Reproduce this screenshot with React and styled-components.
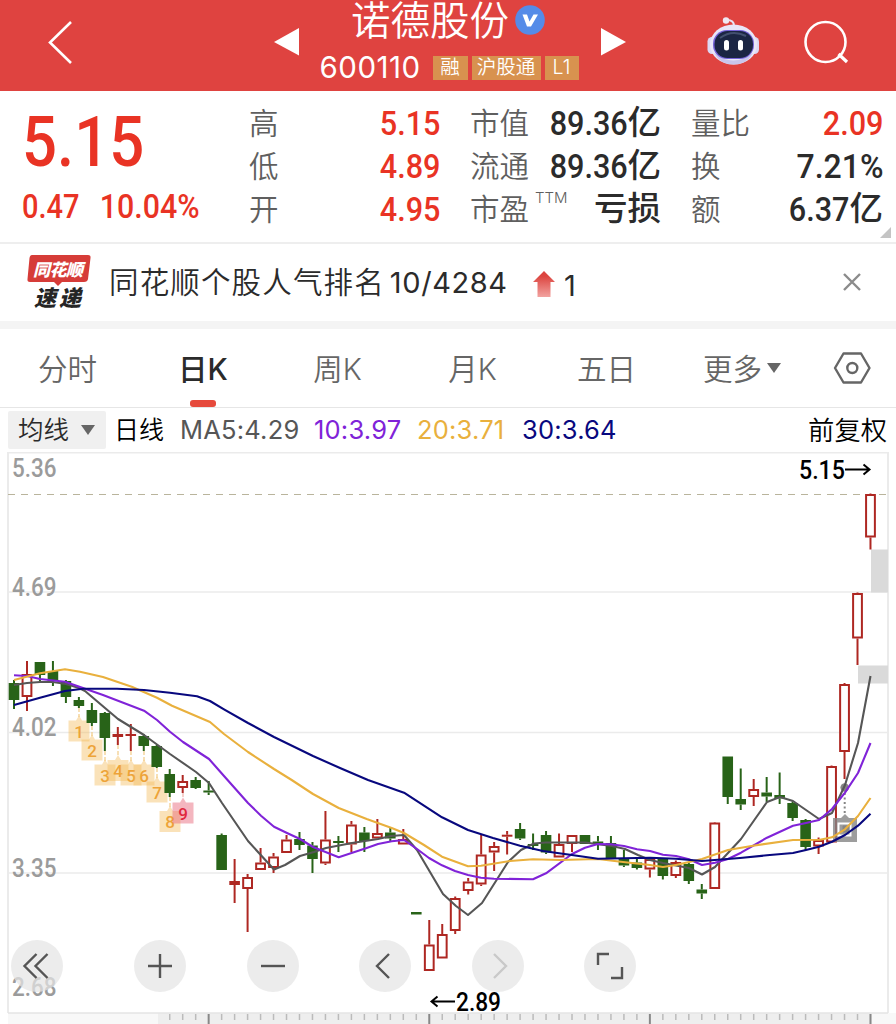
import React from 'react'
import styled, { createGlobalStyle } from 'styled-components'

const GlobalStyle = createGlobalStyle`
  * { box-sizing: border-box; }
  body {
    margin: 0;
    background: #fff;
    color: #2b2b2b;
    font-family: Inter, 'Noto Sans CJK SC', sans-serif;
    overflow: hidden;
  }
`

const Page = styled.div`
  width: 896px;
  height: 1024px;
  overflow: hidden;
  display: flex;
  flex-direction: column;
`

/* header */

const TopBar = styled.header`
  display: flex;
  height: 91px;
  flex: none;
  background: #df4340;
  color: #fff;
`

const BarIcon = styled.svg`
  flex: none;
  display: block;
  width: ${p => p.$w}px;
  height: 91px;
  overflow: visible;
`

const Heading = styled.div`
  width: 262px;
  flex: none;
  display: flex;
  flex-direction: column;
  align-items: center;
`

const StockName = styled.div`
  display: flex;
  align-items: flex-start;
  height: 46px;
  margin-left: -4px;
  gap: 6px;
  font-size: 39.5px;
  line-height: 42px;
  font-weight: 350;
  white-space: nowrap;
  svg { margin-top: 5px; }
`

const CodeRow = styled.div`
  display: flex;
  align-items: center;
  gap: 4px;
  height: 28px;
  margin-top: 8px;
  margin-left: -2px;
`

const Code = styled.span`
  width: 109px;
  margin-top: -2px;
  font-size: 29.5px;
  font-weight: 400;
  letter-spacing: 0.5px;
  white-space: nowrap;
`

const Badge = styled.span`
  width: ${p => p.$w}px;
  height: 24px;
  flex: none;
  background: #d8924f;
  font-size: 19.5px;
  font-weight: 350;
  line-height: 23px;
  text-align: center;
  white-space: nowrap;
`

/* quote */

const Quote = styled.section`
  position: relative;
  display: flex;
  height: 153px;
  flex: none;
  padding: 10px 13px 0 0;
  border-bottom: 2px solid #eee;
`

const Num = styled.span`
  display: inline-block;
  font-family: Roboto, 'Noto Sans CJK SC', sans-serif;
  font-weight: 500;
  font-size: ${p => p.$size || 34}px;
  line-height: 1;
  color: ${p => (p.$up ? '#e93324' : '#2b2b2b')};
  transform: scaleX(${p => p.$x || 0.9});
  transform-origin: ${p => p.$origin || 'right'} center;
  white-space: nowrap;
`

const PriceBlock = styled.div`
  width: 249px;
  flex: none;
  padding: 6px 0 0 22px;
`

const Price = styled.div`
  height: 83px;
  line-height: 70px;
`

const Change = styled.div`
  display: flex;
  width: 177px;
  justify-content: space-between;
`

const Stats = styled.div`
  display: grid;
  grid-template-columns: 191px 191px 192px;
  grid-auto-rows: 43px;
  column-gap: 30px;
`

const Stat = styled.div`
  display: flex;
  justify-content: space-between;
  align-items: center;
`

const Label = styled.span`
  font-size: 29.5px;
  font-weight: 350;
  line-height: 43px;
  margin-top: 2px;
  color: #5f5f5f;
  white-space: nowrap;
  sup {
    display: inline-block;
    font-size: 15px;
    line-height: 1;
    vertical-align: 17px;
    margin-left: 6px;
    letter-spacing: 0;
  }
`

const Value = styled.span`
  display: flex;
  align-items: center;
  justify-content: flex-end;
  width: 0;
  em {
    font-style: normal;
    font-size: 33.5px;
    line-height: 43px;
    font-weight: 500;
    white-space: nowrap;
  }
`

const Corner = styled.i`
  position: absolute;
  right: 5px;
  bottom: 4px;
  border-left: 11px solid transparent;
  border-bottom: 11px solid #c4c4c4;
`

/* news strip */

const News = styled.section`
  display: flex;
  align-items: center;
  height: 85px;
  flex: none;
  border-bottom: 8px solid #f4f4f4;
  padding-left: 26px;
`

const NewsLogo = styled.svg`
  overflow: visible;
  flex: none;
  margin-top: -3px;
`

const NewsText = styled.span`
  margin-left: 18px;
  margin-top: -6px;
  width: 423px;
  font-size: 29.5px;
  font-weight: 350;
  letter-spacing: 1.15px;
  white-space: nowrap;
  b { font-weight: 400; font-size: 29px; letter-spacing: 0.6px; margin-left: 5px; }
`

const Rank = styled.span`
  width: 278px;
  margin-left: 8px;
  margin-top: 6px;
  font-size: 29px;
`

const Close = styled.svg`
  margin-top: -2px;
`

/* tabs */

const Tabs = styled.nav`
  display: flex;
  height: 79px;
  flex: none;
  border-bottom: 1px solid #e6e6e6;
`

const Tab = styled.div`
  display: flex;
  flex-direction: column;
  align-items: center;
  justify-content: space-between;
  width: ${p => p.$w}px;
  padding-top: 18px;
  font-size: 29.5px;
  line-height: 44px;
  font-weight: ${p => (p.$active ? 500 : 350)};
  color: ${p => (p.$active ? '#2b2b2b' : '#666')};
  white-space: nowrap;
  &::after {
    content: '';
    width: 26px;
    height: 7px;
    border-radius: 3px;
    background: ${p => (p.$active ? '#e64a3c' : 'transparent')};
  }
`

const Caret = styled.i`
  display: inline-block;
  vertical-align: ${p => p.$up || 7}px;
  margin-left: ${p => p.$gap}px;
  border: 7px solid transparent;
  border-top: 10px solid #666;
  border-bottom: 0;
`

/* indicator row */

const Indicators = styled.div`
  display: flex;
  align-items: center;
  height: 44px;
  flex: none;
  padding: 0 9px 0 8px;
  font-size: 25.5px;
  white-space: nowrap;
`

const Picker = styled.div`
  width: 98px;
  height: 38px;
  padding-left: 10px;
  border-radius: 2px;
  background: #f0f0f0;
  line-height: 38px;
  font-weight: 350;
`

const Period = styled.span`
  margin-left: 8px;
  margin-top: -4px;
  width: 66px;
  font-size: 25px;
  font-weight: 350;
  color: #000;
`

const Ma = styled.span`
  width: ${p => p.$w}px;
  margin-top: -2px;
  color: ${p => p.$color};
  letter-spacing: 0.2px;
`

const Adjust = styled.span`
  margin-left: auto;
  margin-top: -4px;
  font-size: 26.3px;
  font-weight: 350;
  color: #000;
`

/* chart */

const ChartArea = styled.section`
  position: relative;
  flex: 1;
`

const Plot = styled.svg`
  display: block;
`

const Controls = styled.div`
  position: absolute;
  left: 11px;
  top: 488px;
  display: flex;
`

const Control = styled.button`
  width: 52px;
  height: 52px;
  margin: 0 ${p => p.$gap || 60.5}px 0 0;
  padding: 0;
  border: 0;
  border-radius: 50%;
  background: rgba(228, 228, 228, 0.72);
  svg { display: block; }
`

// [open/close top, open/close bottom, high, low, rising]
const candles = [
  [683, 700, 680, 709, 0], [674, 697, 661, 711, 1], [662, 675, 662, 681, 0],
  [671, 681, 661, 686, 0], [681, 697, 680, 703, 0], [700, 706, 697, 708, 0],
  [710, 723, 703, 726, 0], [713, 738, 712, 751, 0], [734, 737, 727, 745, 1],
  [734, 736, 724, 751, 1], [736, 746, 734, 751, 0], [746, 767, 745, 768, 0],
  [774, 793, 769, 797, 0], [781, 788, 775, 793, 1], [780, 788, 777, 789, 0],
  [790.5, 792.5, 781, 795, 0], [835, 870, 833.5, 870, 0], [881, 885, 859, 903, 1],
  [877, 889, 874, 932, 1], [862.5, 870, 848, 870, 1], [856.5, 868, 853, 873, 1],
  [839.5, 853, 835, 853, 1], [839, 845, 832, 850, 0], [845.5, 859, 842, 873, 0],
  [839.5, 863.5, 811, 865, 1], [841, 843, 836, 852, 0], [824.5, 844.5, 821, 852, 1],
  [832.5, 841, 827, 852, 0], [833, 838.5, 819, 838, 1], [832.5, 838.5, 827.5, 841, 0],
  [839, 844.5, 829, 844, 1], [912, 914.5, 912, 914, 0], [944.5, 971, 920, 971, 1],
  [934, 958.5, 924, 958, 1], [898, 931, 896.5, 934, 1], [881.5, 891, 878, 894.5, 1],
  [854.5, 884.5, 834, 886, 1], [846, 852.5, 842, 871, 1], [834.7, 836.7, 831, 854.5, 1],
  [829, 838.5, 823, 840, 0], [844, 846, 833.5, 850, 0], [835, 852.5, 831, 854, 0],
  [844, 857.5, 833.5, 857, 1], [835, 844, 835, 852, 1], [835, 844, 835, 844, 0],
  [841.5, 843.5, 836, 850, 0], [843, 859, 836, 859, 0], [858.5, 865.5, 850, 867, 0],
  [862.5, 868, 858, 869.5, 0], [859, 869.5, 859, 877.5, 1], [859, 876, 859, 879.5, 0],
  [862, 876, 860.5, 878, 1], [864, 881, 862.5, 884, 0], [889.5, 893.5, 884, 899, 0],
  [822.5, 889, 822, 889, 1], [756.5, 797, 756.5, 804, 0], [799, 804.5, 768.5, 810, 0],
  [789, 797, 779, 806, 1], [792.5, 796.5, 777, 802, 0], [795, 798.5, 772.5, 804, 0],
  [803, 818, 801.5, 821, 0], [820, 847, 819, 850, 0], [840, 846.5, 837.5, 854, 1],
  [766, 842.5, 765.5, 843, 1], [684, 752, 683, 779, 1], [593, 638.5, 592.5, 665, 1],
  [494, 537.5, 493.5, 549.5, 1],
]

const averages = [
  {
    color: '#565656',
    points: '14,685 27,683 40,682 53,682 66,684 79,688 85,691 105,708 118,719 144,735 170,754 196,772 209,783 222,803 248,841 274,869.5 285,865 300,856 314,852 326,848 352,843 378,839 391,836 404,835 417,850 443,894 456,906 468,915 482,903 508,862 521,850 534,843.5 546,842.5 585,842.5 612,846 625,849 638,855 650,860 663,863 689,868 702,874.5 715,867 728,853 741,839 767,802 780,797 793,801 819,819 832,813 845,785 858,743 870.5,676',
  },
  {
    color: '#8023d8',
    points: '14,675.3 27,676 40,679 65,681.7 83,688 103,695 131.7,706 144,710.7 157,720 170,731.7 183,742 209,759 224,776 248,803 261,815.7 274,826.7 287,833 300,839 313,847 338.7,857.3 366.7,848 378,844 391.7,841.3 404,840 417,849 429,858 442,865.3 455,871 468,875 481,877.7 494,878.7 533,879.3 546,873.3 572,854 585,847.7 598,844 611,844.3 624,846 637,849.3 650,851 663,854.7 676,856 689,859.3 702,865 715,862.7 728,859 741,852.7 767,837.7 793,825.7 806,823 819,820 832,809 845,792.7 858,773 870.5,743',
  },
  {
    color: '#e9b03d',
    points: '14,680 40,673.3 65,669.3 80,671.7 103,677 131.7,686.7 157,697.7 172,705.7 210,722 224,734 248,752 274,769 291.7,780 313,794 338.7,808 366.7,819 391.7,828 404,833 424,845 442,856.7 468,866.3 481,865.7 510,861 533,859.3 560,860 598,859 623,862 650,865 663,867 676,865 702,859 728,850 753,845.7 793,840 820,839.7 832,837.3 845,829.3 858,816 870.5,798',
  },
  {
    color: '#08087e',
    points: '14,705 40,697.7 65,691 83,688.7 117,688.7 144,690 170,692.7 197,696.3 210,701 224,709.3 248,723 274,737 313,756 340,768 368,780 404,792.7 442,817.3 468,830 493,838 520,845.7 543,851 570,854.7 598,858.7 650,857.7 676,858.7 702,861 740,858 767,855.3 793,853 806,850 819,846.7 832,841.7 845,835 858,825.7 870.5,813.7',
  },
]

// numbered marks under the falling run: x, box centre, low of the candle
const marks = [
  [79, 731, 708], [92, 750, 726], [105, 775, 751], [118, 770.5, 745], [131, 775, 751],
  [144, 775, 751], [157, 792, 768], [170, 821.5, 797], [183, 813, 793],
]

const priceLabels = [['5.36', 476.5], ['4.69', 595.5], ['4.02', 736], ['3.35', 876.5], ['2.68', 995.5]]

const step = 12.977

const Candle = ({ x, data: [top, bottom, high, low, up] }) => {
  const color = up ? '#ae2722' : '#286318'
  const hollow = up && bottom - top > 5
  return (
    <g stroke={color} strokeWidth="2">
      {high < top && <line x1={x} x2={x} y1={high} y2={top} />}
      {low > bottom && <line x1={x} x2={x} y1={bottom} y2={low} />}
      {hollow
        ? <rect x={x - 4.4} y={top + 1} width="8.8" height={bottom - top - 2} fill="#fff" />
        : <rect x={x - 5.3} y={top} width="10.6" height={bottom - top} fill={color} stroke="none" />}
    </g>
  )
}

const Mark = ({ n, x, y, from }) => {
  const hot = n === 9
  return (
    <g>
      <line x1={x} x2={x} y1={from} y2={y - 14} stroke={hot ? '#eeb0a8' : '#f2cb86'} strokeWidth="1.2" strokeDasharray="4 2" />
      <path
        d={`M${x - 10.5} ${y - 10.5}h7.5l3-5 3 5h7.5v21h-21z`}
        fill={hot ? '#e8667a' : '#f3ba58'}
        fillOpacity={hot ? 0.48 : 0.42}
      />
      <text x={x} y={y + 6.5} textAnchor="middle" fontSize="17" fontFamily="Roboto" fontWeight="500" fill={hot ? '#e02840' : '#eda338'}>{n}</text>
    </g>
  )
}

const Chart = () => (
  <Plot width="896" height="572" viewBox="0 452 896 572">
    <g stroke="#ebebeb" strokeWidth="1.6" fill="none">
      <path d="M8 592H887M8 732.5H887M8 873H887" />
      <path d="M8 1013V452.5H888V1013" strokeWidth="2" />
    </g>
    <rect x="8" y="1013" width="888" height="11" fill="#f8f8f8" />
    <rect x="158" y="1013" width="714" height="11" fill="#eee" />
    <path d="M8 1013H888" stroke="#e4e4e4" strokeWidth="1.5" />
    {candles.map((c, i) => {
      if (i < 12) return null
      const x = 14 + step * i
      const major = [15, 32, 49, 66].includes(i)
      return <line key={i} x1={x} x2={x} y1="1014" y2={major ? 1024 : 1020} stroke={major ? '#888' : '#bbb'} strokeWidth={major ? 2 : 1.5} />
    })}
    <line x1="8" x2="887" y1="494.5" y2="494.5" stroke="#b9b49c" strokeWidth="1.2" strokeDasharray="7 6" />
    <rect x="871" y="549.5" width="17" height="43" fill="#dadada" />
    <rect x="858" y="665.5" width="30" height="18" fill="#dadada" />
    <g fontFamily="Roboto" fontSize="25" fontWeight="500" fill="#9b9b9b">
      {priceLabels.map(([t, y]) => <text key={t} x="12" y={y} textLength="44.5" lengthAdjust="spacingAndGlyphs">{t}</text>)}
    </g>
    {marks.map(([x, y, from], i) => <Mark key={i} n={i + 1} x={x} y={y} from={from} />)}
    {candles.map((c, i) => <Candle key={i} x={14 + step * i} data={c} />)}
    <g stroke="#858585" fill="none">
      <path d="M833 818h8l4-4 4 4h8v24h-24z" fill="#858585" fillOpacity=".8" stroke="none" />
      <rect x="838.5" y="823.5" width="12" height="12" stroke="#fff" strokeWidth="2" />
      <path d="M843 826h6v6h-6z" fill="#858585" />
      <circle cx="844.7" cy="787.5" r="4.3" fill="#858585" stroke="none" />
      <path d="M844.7 793V815" strokeWidth="2" strokeDasharray="2 2.5" />
    </g>
    {averages.map(a => <polyline key={a.color} points={a.points} fill="none" stroke={a.color} strokeWidth="2.1" strokeLinejoin="round" />)}
    <g fontFamily="Roboto" fontSize="25.5" fontWeight="500" fill="#000">
      <text x="799" y="479" textLength="46" lengthAdjust="spacingAndGlyphs">5.15</text>
      <text x="456" y="1011" textLength="45" lengthAdjust="spacingAndGlyphs">2.89</text>
    </g>
    <path d="M845 469.5H869M863.5 464.5L869.5 469.5L863.5 474.5M455 1001.5H432M437.5 996.5L431.5 1001.5L437.5 1006.5" fill="none" stroke="#000" strokeWidth="2" />
  </Plot>
)

const ControlIcon = ({ d, faint }) => (
  <svg width="52" height="52" fill="none" stroke={faint ? '#c9c9c9' : '#555'} strokeWidth="2.4">
    <path d={d} />
  </svg>
)

const Robot = () => (
  <BarIcon $w={52} viewBox="707 0 52 91">
    <path d="M734 26C734 22 731 20 727 20" stroke="#e8e4f4" strokeWidth="2" fill="none" />
    <circle cx="726" cy="20.5" r="3.2" fill="#f0e8f2" />
    <rect x="707.5" y="37" width="9" height="17" rx="4.5" fill="#dcd8f4" />
    <rect x="750" y="37" width="9" height="17" rx="4.5" fill="#dcd8f4" />
    <ellipse cx="733.5" cy="44.5" rx="23.5" ry="20" fill="#e9e6f8" />
    <path d="M714 53Q733 68 753 53Q747 64.5 733.5 64.5T714 53" fill="#c9c5ec" />
    <rect x="713" y="30" width="41" height="29" rx="14" fill="#7563d8" />
    <rect x="714.5" y="31" width="38.5" height="27" rx="13" fill="#1b2543" />
    <path d="M720 38Q732 29 746 36" stroke="#43506f" strokeWidth="2" fill="none" />
    <rect x="724" y="40" width="5" height="10.5" rx="2.5" fill="#fff" />
    <rect x="738" y="40" width="5" height="10.5" rx="2.5" fill="#fff" />
  </BarIcon>
)

const Header = () => (
  <TopBar>
    <BarIcon $w={274} viewBox="0 0 274 91">
      <path d="M71 22L50 42.5L71 63" fill="none" stroke="#fff" strokeWidth="2.6" />
    </BarIcon>
    <BarIcon $w={45} viewBox="274 0 45 91">
      <path d="M274 42L299 28V55.5z" fill="#fff" />
    </BarIcon>
    <Heading>
      <StockName>
        <span>诺德股份</span>
        <svg width="30" height="30">
          <circle cx="15" cy="15" r="14.8" fill="#558be8" />
          <path d="M7.5 9.5H12L14.5 16.5L18.5 9.5H23L16 21.5H12z" fill="#fff" />
        </svg>
      </StockName>
      <CodeRow>
        <Code>600110</Code>
        <Badge $w={35}>融</Badge>
        <Badge $w={69}>沪股通</Badge>
        <Badge $w={34}>L1</Badge>
      </CodeRow>
    </Heading>
    <BarIcon $w={126} viewBox="581 0 126 91">
      <path d="M626 42L601 28V55.5z" fill="#fff" />
    </BarIcon>
    <Robot />
    <BarIcon $w={137} viewBox="759 0 137 91">
      <circle cx="825.5" cy="42" r="20" fill="none" stroke="#fff" strokeWidth="2.6" />
      <path d="M838.5 54L847 62" stroke="#fff" strokeWidth="3.2" />
    </BarIcon>
  </TopBar>
)

const stats = [
  ['高', '5.15', '', true], ['市值', '89.36', '亿'], ['量比', '2.09', '', true],
  ['低', '4.89', '', true], ['流通', '89.36', '亿'], ['换', '7.21%', ''],
  ['开', '4.95', '', true], ['市盈', '', '亏损'], ['额', '6.37', '亿'],
]

const QuotePanel = () => (
  <Quote>
    <PriceBlock>
      <Price><Num $up $size={70} $x={0.88} $origin="left">5.15</Num></Price>
      <Change>
        <Num $up $size={33} $x={0.88} $origin="left">0.47</Num>
        <Num $up $size={33} $x={0.92}>10.04%</Num>
      </Change>
    </PriceBlock>
    <Stats>
      {stats.map(([label, num, unit, up]) => (
        <Stat key={label}>
          <Label>{label}{label === '市盈' && <sup>TTM</sup>}</Label>
          <Value>
            {num && <Num $up={up} $x={num.endsWith('%') ? 0.94 : 0.9}>{num}</Num>}
            {unit && <em>{unit}</em>}
          </Value>
        </Stat>
      ))}
    </Stats>
    <Corner />
  </Quote>
)

const NewsRow = () => (
  <News>
    <NewsLogo width="65" height="54" viewBox="26 254 65 54">
      <path d="M32 255H88Q91 255 90.5 258L88 279Q87.5 282 84 282H62L58 286L54 282H30Q27 282 27.5 279L29.5 258Q30 255 32 255Z" fill="#d63c38" />
      <g fontFamily="'Noto Sans CJK SC'" fontWeight="900" fontStyle="italic">
        <text x="33" y="275.5" fontSize="17" fill="#fff" textLength="50">同花顺</text>
        <text x="34" y="305.5" fontSize="22" fill="#252525" textLength="47">速递</text>
      </g>
    </NewsLogo>
    <NewsText>同花顺个股人气排名<b>10/4284</b></NewsText>
    <svg width="24" height="28">
      <defs>
        <linearGradient id="rise" x1="0" y1="0" x2="0" y2="1">
          <stop offset="0.2" stopColor="#dc4540" />
          <stop offset="1" stopColor="#f2a3a0" />
        </linearGradient>
      </defs>
      <path d="M12 2L23 13H18.5V28H5.5V13H1z" fill="url(#rise)" />
    </svg>
    <Rank>1</Rank>
    <Close width="20" height="20">
      <path d="M2 2L18 18M18 2L2 18" stroke="#8b8b8b" strokeWidth="2.4" />
    </Close>
  </News>
)

const App = () => (
  <Page>
    <GlobalStyle />
    <Header />
    <QuotePanel />
    <NewsRow />
    <Tabs>
      <Tab $w={135}>分时</Tab>
      <Tab $w={136} $active>日K</Tab>
      <Tab $w={133}>周K</Tab>
      <Tab $w={137}>月K</Tab>
      <Tab $w={131}>五日</Tab>
      <Tab $w={140}><span>更多<Caret $gap={5} /></span></Tab>
      <svg width="80" height="79" viewBox="812 329 80 79" fill="none" stroke="#666" strokeWidth="2.4">
        <path d="M843.5 353.5H861L869.5 368L861 382.5H843.5L835 368z" strokeLinejoin="round" />
        <circle cx="852.3" cy="368" r="5" />
      </svg>
    </Tabs>
    <Indicators>
      <Picker>均线<Caret $gap={12} $up={4} /></Picker>
      <Period>日线</Period>
      <Ma $w={134} $color="#565656">MA5:4.29</Ma>
      <Ma $w={103} $color="#8023d8">10:3.97</Ma>
      <Ma $w={105} $color="#e9b03d">20:3.71</Ma>
      <Ma $w={100} $color="#08087e">30:3.64</Ma>
      <Adjust>前复权</Adjust>
    </Indicators>
    <ChartArea>
      <Chart />
      <Controls>
        <Control $gap={71}><ControlIcon d="M25.5 14L13.5 26L25.5 38M36.5 14L24.5 26L36.5 38" /></Control>
        <Control><ControlIcon d="M14 26H38M26 14V38" /></Control>
        <Control><ControlIcon d="M14 26H38" /></Control>
        <Control><ControlIcon d="M30 14L18 26L30 38" /></Control>
        <Control><ControlIcon faint d="M22 14L34 26L22 38" /></Control>
        <Control><ControlIcon d="M14 25V14H25M38 27V38H27" /></Control>
      </Controls>
    </ChartArea>
  </Page>
)

export default App
